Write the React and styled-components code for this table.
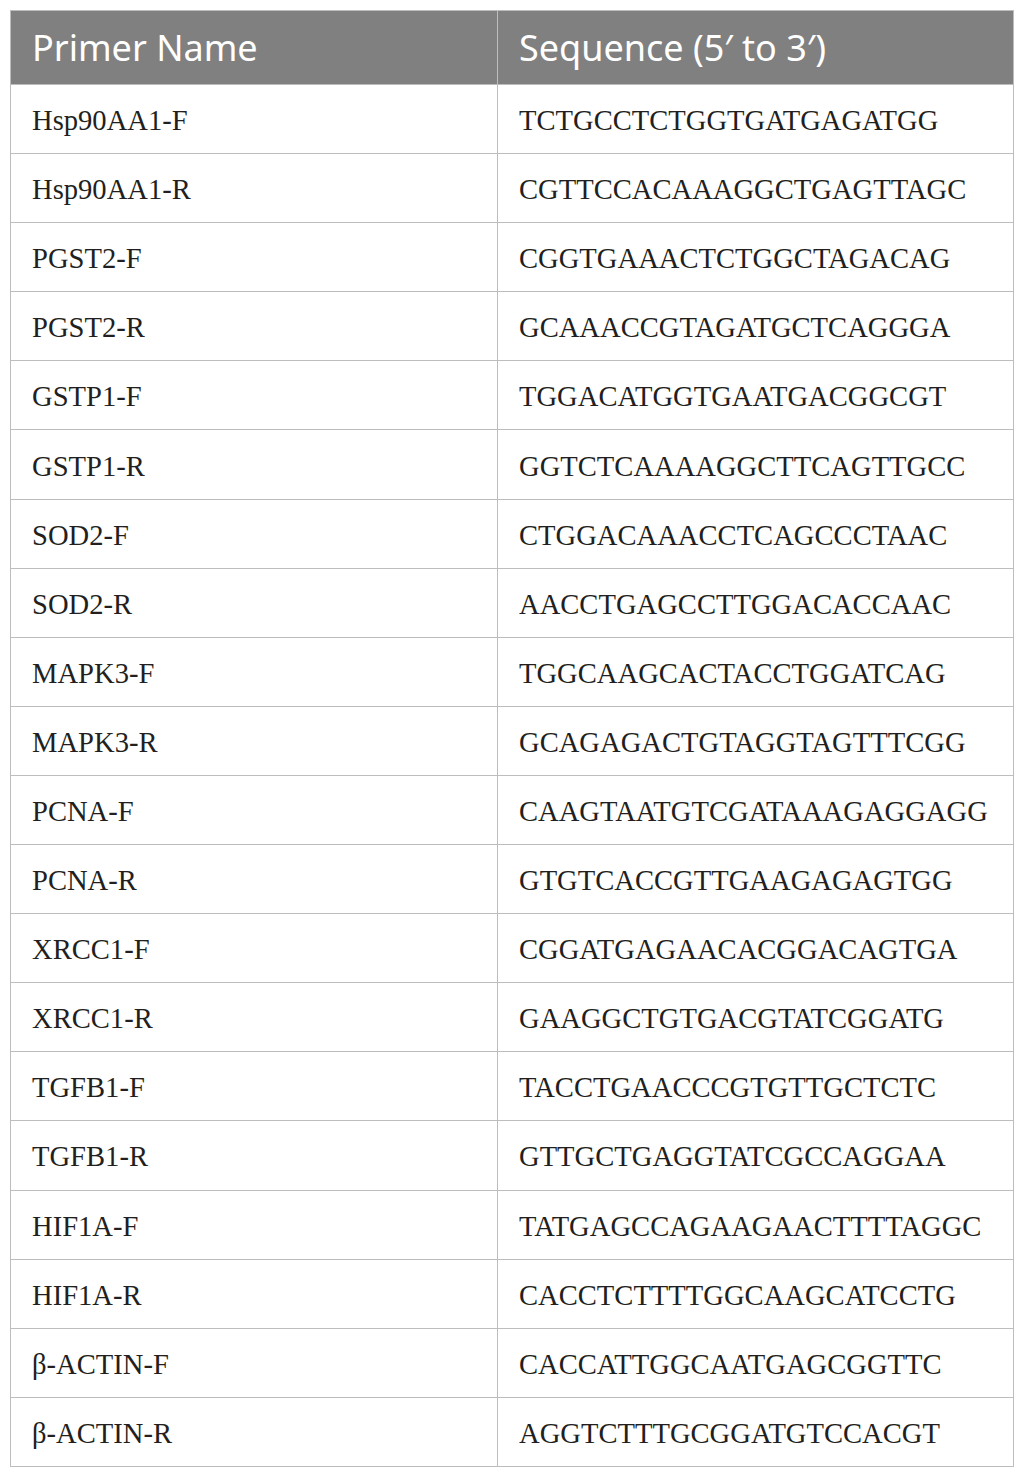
import React from 'react';
import styled, { createGlobalStyle } from 'styled-components';

const GlobalStyle = createGlobalStyle`
  html, body {
    margin: 0;
    padding: 0;
    background: #ffffff;
  }
`;

const Page = styled.div`
  padding: 10px 11px 10px 10px;
`;

const Table = styled.table`
  width: 100%;
  border-collapse: collapse;
  border: 1px solid #bdbdbd;
  table-layout: fixed;
`;

const HeadCell = styled.th`
  box-sizing: border-box;
  height: 74px;
  padding: 0 21px;
  background: #7f807f;
  color: #ffffff;
  font-family: 'Noto Sans', 'Open Sans', sans-serif;
  font-size: 36px;
  font-weight: 400;
  text-align: left;
  border: 1px solid #bdbdbd;
  width: ${(props) => props.$width || 'auto'};
`;

const Cell = styled.td`
  box-sizing: border-box;
  height: 69.1px;
  padding: 4px 21px 0;
  color: #231f20;
  font-family: 'Liberation Serif', 'Times New Roman', serif;
  font-size: 28.6px;
  border: 1px solid #bdbdbd;
  white-space: nowrap;
`;

const primers = [
  ['Hsp90AA1-F', 'TCTGCCTCTGGTGATGAGATGG'],
  ['Hsp90AA1-R', 'CGTTCCACAAAGGCTGAGTTAGC'],
  ['PGST2-F', 'CGGTGAAACTCTGGCTAGACAG'],
  ['PGST2-R', 'GCAAACCGTAGATGCTCAGGGA'],
  ['GSTP1-F', 'TGGACATGGTGAATGACGGCGT'],
  ['GSTP1-R', 'GGTCTCAAAAGGCTTCAGTTGCC'],
  ['SOD2-F', 'CTGGACAAACCTCAGCCCTAAC'],
  ['SOD2-R', 'AACCTGAGCCTTGGACACCAAC'],
  ['MAPK3-F', 'TGGCAAGCACTACCTGGATCAG'],
  ['MAPK3-R', 'GCAGAGACTGTAGGTAGTTTCGG'],
  ['PCNA-F', 'CAAGTAATGTCGATAAAGAGGAGG'],
  ['PCNA-R', 'GTGTCACCGTTGAAGAGAGTGG'],
  ['XRCC1-F', 'CGGATGAGAACACGGACAGTGA'],
  ['XRCC1-R', 'GAAGGCTGTGACGTATCGGATG'],
  ['TGFB1-F', 'TACCTGAACCCGTGTTGCTCTC'],
  ['TGFB1-R', 'GTTGCTGAGGTATCGCCAGGAA'],
  ['HIF1A-F', 'TATGAGCCAGAAGAACTTTTAGGC'],
  ['HIF1A-R', 'CACCTCTTTTGGCAAGCATCCTG'],
  ['β-ACTIN-F', 'CACCATTGGCAATGAGCGGTTC'],
  ['β-ACTIN-R', 'AGGTCTTTGCGGATGTCCACGT'],
];

export default function App() {
  return (
    <Page>
      <GlobalStyle />
      <Table>
        <thead>
          <tr>
            <HeadCell $width="487px">Primer Name</HeadCell>
            <HeadCell>Sequence (5′ to 3′)</HeadCell>
          </tr>
        </thead>
        <tbody>
          {primers.map(([name, seq]) => (
            <tr key={name}>
              <Cell>{name}</Cell>
              <Cell>{seq}</Cell>
            </tr>
          ))}
        </tbody>
      </Table>
    </Page>
  );
}
